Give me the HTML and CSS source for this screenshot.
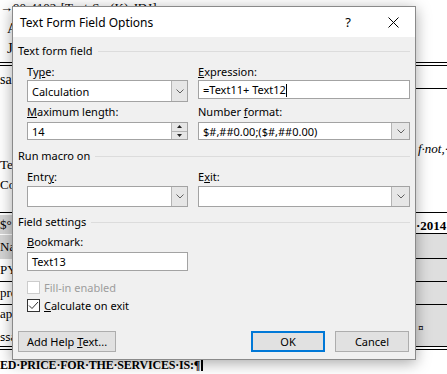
FILE: index.html
```html
<!DOCTYPE html>
<html lang="en">
<head>
  <meta charset="UTF-8" />
  <title>Text Form Field Options</title>
  <link rel="stylesheet" href="styles.css">
</head>
<body>
  <!-- Word document behind the dialog -->
  <div class="doc">
    <div class="doc-top">→90·4102·[Text·Sn·(K)·JDJ]</div>
    <div class="doc-line indent">A</div>
    <div class="doc-line indent">J</div>
    <div class="rule-double first"></div>
    <div class="row row-sar">
      <div class="cell-l"><span class="t">sary</span></div>
      <div class="cell-r"></div>
    </div>
    <div class="row row-big">
      <div class="cell-l"><p>Teach</p><p>Cont</p></div>
      <div class="cell-r"><p class="ital">f·not,·</p></div>
    </div>
    <div class="row row-date">
      <div class="cell-l"><span class="shade">$°·</span></div>
      <div class="cell-r"><span class="bold">·2014</span></div>
    </div>
    <div class="row row-name grey">
      <div class="cell-l"><span class="shade">Na</span></div>
      <div class="cell-r"></div>
    </div>
    <div class="row row-py grey">
      <div class="cell-l">PYM</div>
      <div class="cell-r"></div>
    </div>
    <div class="row row-pr grey">
      <div class="cell-l">pro</div>
      <div class="cell-r"></div>
    </div>
    <div class="row row-ap grey">
      <div class="cell-l"><p>ap·</p><p class="sans">ssa</p></div>
      <div class="cell-r"><p class="mark">¤</p></div>
    </div>
    <div class="rule-double"></div>
    <div class="doc-foot">ED·PRICE·FOR·THE·SERVICES·IS:¶<span class="doc-caret"></span></div>
  </div>

  <!-- Dialog -->
  <div class="dialog">
    <div class="titlebar">
      <span class="title">Text Form Field Options</span>
      <span class="help">?</span>
      <svg class="close" width="11" height="11" viewBox="0 0 11 11">
        <path d="M0.5 0.5 L10.5 10.5 M10.5 0.5 L0.5 10.5" stroke="#000" stroke-width="1" fill="none"/>
      </svg>
    </div>

    <div class="body">
      <div class="group-head">Text form field</div>
      <div class="grid grid-main">
        <div class="field">
          <label>Ty<u>p</u>e:</label>
          <div class="combo tall">
            <span class="val">Calculation</span>
            <span class="drop"><svg width="8" height="5" viewBox="0 0 8 5"><path d="M0.5 0.5 L4 4 L7.5 0.5" stroke="#606060" fill="none"/></svg></span>
          </div>
        </div>
        <div class="field">
          <label><u>E</u>xpression:</label>
          <div class="textbox">=Text11+ Text12<span class="caret"></span></div>
        </div>
        <div class="field">
          <label><u>M</u>aximum length:</label>
          <div class="spin">
            <span class="val">14</span>
            <span class="spin-btns">
              <span class="spin-up"><svg width="5" height="3" viewBox="0 0 5 3"><path d="M0 3 L2.5 0 L5 3 Z" fill="#222"/></svg></span>
              <span class="spin-down"><svg width="5" height="3" viewBox="0 0 5 3"><path d="M0 0 L2.5 3 L5 0 Z" fill="#222"/></svg></span>
            </span>
          </div>
        </div>
        <div class="field">
          <label>Number <u>f</u>ormat:</label>
          <div class="combo short">
            <span class="val">$#,##0.00;($#,##0.00)</span>
            <span class="drop wide"><svg width="8" height="5" viewBox="0 0 8 5"><path d="M0.5 0.5 L4 4 L7.5 0.5" stroke="#606060" fill="none"/></svg></span>
          </div>
        </div>
      </div>

      <div class="group-head macro">Run macro on</div>
      <div class="grid grid-macro">
        <div class="field">
          <label>Entr<u>y</u>:</label>
          <div class="combo mid">
            <span class="val"></span>
            <span class="drop"><svg width="8" height="5" viewBox="0 0 8 5"><path d="M0.5 0.5 L4 4 L7.5 0.5" stroke="#606060" fill="none"/></svg></span>
          </div>
        </div>
        <div class="field">
          <label>E<u>x</u>it:</label>
          <div class="combo mid">
            <span class="val"></span>
            <span class="drop wide"><svg width="8" height="5" viewBox="0 0 8 5"><path d="M0.5 0.5 L4 4 L7.5 0.5" stroke="#606060" fill="none"/></svg></span>
          </div>
        </div>
      </div>

      <div class="group-head settings">Field settings</div>
      <div class="field bookmark">
        <label><u>B</u>ookmark:</label>
        <div class="textbox">Text13</div>
      </div>
      <div class="check disabled first-check">
        <span class="box"></span>
        <span>Fill-in enabled</span>
      </div>
      <div class="check">
        <span class="box"><svg width="11" height="11" viewBox="0 0 11 11"><path d="M1 5.5 L4 8.5 L10 2" stroke="#333" stroke-width="1" fill="none"/></svg></span>
        <span><u>C</u>alculate on exit</span>
      </div>

      <div class="buttons">
        <button class="btn help-btn">Add Help <u>T</u>ext...</button>
        <div class="btn-group">
          <button class="btn ok">OK</button>
          <button class="btn">Cancel</button>
        </div>
      </div>
    </div>
  </div>
</body>
</html>
```

FILE: styles.css
```css
* {
  margin: 0;
  padding: 0;
  box-sizing: border-box;
}
html, body {
  width: 447px;
  height: 374px;
  overflow: hidden;
}
body {
  position: relative;
  background: #fff;
  color: #000;
  font-family: "Liberation Serif", serif;
}

/* document behind */
.doc {
  width: 447px;
  font-size: 14px;
  white-space: nowrap;
}
.doc-top {
  height: 18px;
  font-size: 13px;
  line-height: 13px;
  padding-top: 1px;
}
.doc-line {
  height: 20px;
  line-height: 20px;
  font-size: 15px;
}
.indent {
  padding-left: 7px;
}
.rule-double {
  height: 4px;
  border-top: 1px solid #000;
  border-bottom: 1px solid #000;
}
.rule-double.first {
  margin-top: 4px;
}
.row {
  display: flex;
}
.cell-l {
  width: 416px;
}
.cell-r {
  flex: 1;
  overflow: hidden;
}
.row-sar {
  height: 23px;
}
.row-sar .cell-l {
  padding-top: 6px;
  line-height: 16px;
}
.row-sar .cell-r {
  border-bottom: 1px solid #000;
}
.row-big {
  height: 124px;
  border-bottom: 1px solid #000;
  font-size: 13px;
}
.row-big .cell-l {
  padding-top: 66px;
  line-height: 20px;
}
.row-big .cell-r {
  padding-top: 52px;
  padding-left: 2px;
  line-height: 16px;
}
.ital {
  font-style: italic;
}
.row-date {
  height: 21px;
  border-bottom: 1px solid #000;
  line-height: 19px;
  font-size: 13px;
}
.row-date .cell-l {
  padding-top: 2px;
}
.row-date .cell-r {
  padding-top: 3px;
}
.bold {
  font-weight: bold;
}
.shade {
  background: #d4d4d4;
  display: inline-block;
  padding-right: 4px;
}
.row-name {
  height: 25px;
  line-height: 24px;
  font-size: 13px;
}
.row-name .cell-l {
  padding-top: 1px;
}
.row-py,
.row-pr {
  height: 23px;
  line-height: 22px;
  font-size: 13px;
}
.grey {
  border-bottom: 1px solid #000;
}
.grey .cell-r {
  background: #dedede;
}
.row-ap {
  height: 41px;
  border-bottom: none;
  font-size: 13px;
}
.row-ap .cell-l p {
  line-height: 16px;
}
.row-ap .cell-l {
  padding-top: 1px;
}
.sans {
  font-family: "Noto Sans", sans-serif;
  font-size: 11px;
  margin-top: 7px;
}
.mark {
  font-family: "Noto Sans", sans-serif;
  font-size: 10px;
  padding-left: 2px;
  padding-top: 16px;
}
.doc-foot {
  margin-top: 6px;
  font-size: 12px;
  font-weight: bold;
  line-height: 18px;
  letter-spacing: -0.2px;
}
.doc-caret {
  display: inline-block;
  width: 2px;
  height: 13px;
  background: #000;
  vertical-align: -2px;
  margin-left: 1px;
}

/* dialog */
.dialog {
  position: absolute;
  left: 12px;
  top: 6px;
  width: 404px;
  height: 354px;
  background: #f0f0f0;
  border: 1px solid #8a8a8a;
  box-shadow: 0 3px 14px rgba(0, 0, 0, 0.35);
  font-family: "Noto Sans", sans-serif;
  font-size: 11px;
  color: #000;
  display: flex;
  flex-direction: column;
}
.titlebar {
  height: 30px;
  background: #fff;
  display: flex;
  align-items: center;
  padding-left: 7px;
}
.title {
  flex: 1;
  font-size: 12px;
}
.help {
  width: 14px;
  text-align: center;
  font-size: 13px;
  margin-right: 33px;
}
.close {
  margin-right: 16px;
}
.body {
  flex: 1;
  display: flex;
  flex-direction: column;
  padding: 6px 5px 0 5px;
}
.group-head {
  display: flex;
  align-items: center;
  gap: 5px;
  height: 16px;
  line-height: 16px;
}
.group-head::after {
  content: "";
  flex: 1;
  border-top: 1px solid #dcdcdc;
}
.group-head.macro {
  margin-top: 8px;
}
.group-head.settings {
  margin-top: 7px;
}
.grid {
  display: grid;
  grid-template-columns: 161px 212px;
  column-gap: 10px;
  margin-left: 9px;
}
.grid-main {
  margin-top: 5px;
  row-gap: 2px;
}
.grid-macro {
  margin-top: 5px;
}
.field {
  display: flex;
  flex-direction: column;
  align-items: flex-start;
}
.field label {
  height: 16px;
  line-height: 16px;
}
.grid-main .field:nth-child(n+3) label {
  margin-bottom: 2px;
}
.grid-macro .field label {
  margin-bottom: 1px;
}
.textbox {
  width: 100%;
  height: 19px;
  background: #fff;
  border: 1px solid #a3a3a3;
  padding-left: 4px;
  line-height: 17px;
  white-space: nowrap;
}
.caret {
  display: inline-block;
  width: 1px;
  height: 13px;
  background: #000;
  vertical-align: -3px;
}
.combo,
.spin {
  width: 100%;
  display: flex;
  background: #fff;
  border: 1px solid #a3a3a3;
}
.combo.tall {
  height: 22px;
}
.combo.short,
.spin {
  height: 18px;
}
.combo.mid {
  height: 21px;
}
.val {
  flex: 1;
  padding-left: 4px;
  white-space: nowrap;
  display: flex;
  align-items: center;
}
.drop {
  width: 16px;
  background: #e6e6e6;
  border-left: 1px solid #b4b4b4;
  display: flex;
  align-items: center;
  justify-content: center;
}
.drop.wide {
  width: 18px;
}
.spin-btns {
  width: 16px;
  display: flex;
  flex-direction: column;
  background: #e6e6e6;
  border-left: 1px solid #b4b4b4;
}
.spin-up,
.spin-down {
  flex: 1;
  display: flex;
  align-items: center;
  justify-content: center;
}
.spin-up {
  border-bottom: 1px solid #b4b4b4;
}
.bookmark {
  width: 161px;
  margin-left: 9px;
  margin-top: 4px;
}
.bookmark label {
  margin-bottom: 2px;
}
.check {
  display: flex;
  align-items: center;
  gap: 4px;
  height: 16px;
  margin-left: 9px;
  margin-top: 2px;
}
.check.first-check {
  margin-top: 8px;
}
.box {
  width: 13px;
  height: 13px;
  border: 1px solid #333;
  background: #fff;
  display: flex;
  align-items: center;
  justify-content: center;
}
.check.disabled {
  color: #9d9d9d;
}
.check.disabled .box {
  border-color: #cccccc;
}
.buttons {
  display: flex;
  justify-content: space-between;
  margin-top: 18px;
  margin-right: 1px;
}
.btn-group {
  display: flex;
  gap: 10px;
}
.btn {
  height: 21px;
  width: 74px;
  background: #e1e1e1;
  border: 1px solid #adadad;
  font-family: "Noto Sans", sans-serif;
  font-size: 11px;
  color: #000;
  line-height: 17px;
}
.btn.help-btn {
  width: 98px;
}
.btn.ok {
  border: 2px solid #0078d7;
}
```
